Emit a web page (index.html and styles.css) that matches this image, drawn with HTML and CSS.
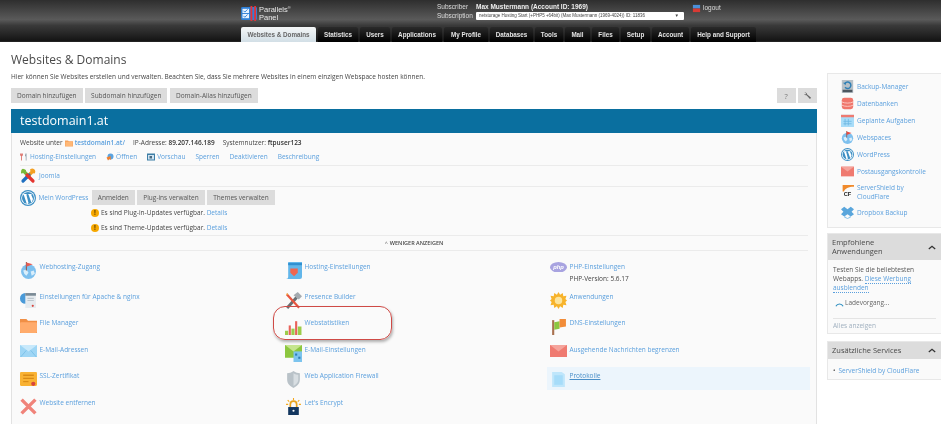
FILE: index.html
```html
<!DOCTYPE html>
<html lang="de">
<head>
<meta charset="utf-8">
<title>Websites &amp; Domains</title>
<link rel="stylesheet" href="styles.css">
</head>
<body>
<header class="topbar">
  <div class="toprow">
    <div class="logo">
      <svg class="logo-mark" viewBox="0 0 18 16"><rect x="0" y="1" width="17" height="14" rx="1.500" fill="#2f7fd6"/><rect x="1.500" y="3" width="7" height="4.500" fill="#e8f2ff"/><rect x="1.500" y="8.500" width="7" height="4.500" fill="#e8f2ff"/><path d="M2.500 5l1.500 1.500 3-3M2.500 10.500l1.500 1.500 3-3" stroke="#2f7fd6" fill="none"/><rect x="10" y="0" width="2" height="16" fill="#e0343a"/><rect x="14" y="0" width="2" height="16" fill="#e0343a"/></svg>
      <div class="logo-text">Parallels<sup>®</sup><br>Panel</div>
    </div>
    <div class="account">
      <div class="account-row"><span class="account-label">Subscriber</span><b class="account-name">Max Mustermann (Account ID: 1969)</b></div>
      <div class="account-row"><span class="account-label">Subscription</span><div class="picker"><span>netstorage Hosting Start (+PHP5 +64bit) (Max Mustermann (1969-4024)) ID: 11836</span><i class="picker-arrow">▼</i></div></div>
    </div>
    <div class="logout">
      <svg class="logout-icon" viewBox="0 0 10 10"><rect x="1" y="1" width="8" height="4" fill="#4a90d9"/><rect x="1" y="5" width="8" height="4" fill="#d83a34"/></svg>logout
    </div>
  </div>
  <nav class="tabs">
    <a class="tab tab-active w1">Websites &amp; Domains</a>
    <a class="tab w2">Statistics</a>
    <a class="tab w3">Users</a>
    <a class="tab w4">Applications</a>
    <a class="tab w5">My Profile</a>
    <a class="tab w6">Databases</a>
    <a class="tab w7">Tools</a>
    <a class="tab w8">Mail</a>
    <a class="tab w9">Files</a>
    <a class="tab w10">Setup</a>
    <a class="tab w11">Account</a>
    <a class="tab w12">Help and Support</a>
  </nav>
</header>

<div class="page">
  <main class="main">
    <h1 class="title">Websites &amp; Domains</h1>
    <p class="desc">Hier können Sie Websites erstellen und verwalten. Beachten Sie, dass Sie mehrere Websites in einem einzigen Webspace hosten können.</p>
    <div class="toolbar">
      <a class="btn">Domain hinzufügen</a>
      <a class="btn">Subdomain hinzufügen</a>
      <a class="btn">Domain-Alias hinzufügen</a>
      <span class="toolbar-gap"></span>
      <a class="btn btn-tool">?</a>
      <a class="btn btn-tool"><svg class="wrench" viewBox="0 0 10 10"><path d="M1.500 1.800a2.500 2.500 0 0 1 3.200 2l4.300 3.700-1.300 1.400-3.800-4.200a2.500 2.500 0 0 1-2.700-1.400l1.500.5 1-1z" fill="#666"/></svg></a>
    </div>

    <section class="card">
      <h2 class="card-title">testdomain1.at</h2>
      <div class="card-body">
        <div class="info-row">
          <span>Website unter</span>
          <svg class="ico8 folder" viewBox="0 0 16 14"><path d="M0 2h6l1.500 1.500H16V14H0z" fill="#f7a35c"/><rect x="1" y="5" width="14" height="8" fill="#ffb877"/></svg>
          <a class="link strong">testdomain1.at/</a>
          <span class="info-gap">IP-Adresse: <b>89.207.146.189</b></span>
          <span class="info-gap">Systemnutzer: <b>ftpuser123</b></span>
        </div>
        <div class="action-row">
          <a class="link action"><svg class="ico8" viewBox="0 0 16 16"><path d="M3 1v6M1 1v3a2 2 0 0 0 4 0V1M3 7v8" stroke="#d9635a" stroke-width="1.600" fill="none"/><path d="M11 1l-1 5 1.500 1V15h1.500V1z" fill="#8a9aa5"/></svg>Hosting-Einstellungen</a>
          <a class="link action"><svg class="ico8" viewBox="0 0 16 16"><circle cx="9" cy="7" r="6" fill="#5aa3e0"/><path d="M1 9l8-3 1 8-3-2-3 3z" fill="#f08030"/></svg>Öffnen</a>
          <a class="link action"><svg class="ico8" viewBox="0 0 16 16"><rect y="1" width="16" height="14" fill="#3d7ea6"/><rect x="2" y="4" width="12" height="9" fill="#cfe3f2"/><rect x="5" y="6" width="5" height="5" fill="#4a6a80"/></svg>Vorschau</a>
          <a class="link action">Sperren</a>
          <a class="link action">Deaktivieren</a>
          <a class="link action">Beschreibung</a>
        </div>
        <div class="app-row joomla-row">
          <svg class="ico16" viewBox="0 0 16 16" fill="none" stroke-width="3.200" stroke-linecap="round"><path d="M3 2.500L9 8.500" stroke="#7ab838"/><path d="M13 3L7 9" stroke="#f4a023"/><path d="M3 13L9 7" stroke="#1f6fc0"/><path d="M13 13L7 7" stroke="#e4352f"/><path d="M2 4.500a2 2 0 0 1 3-2" stroke="#7ab838" stroke-width="2"/><path d="M11 2a2 2 0 0 1 3 2.500" stroke="#f4a023" stroke-width="2"/></svg>
          <a class="link">Joomla</a>
        </div>
        <div class="wp-block">
          <div class="wp-row">
            <svg class="ico16" viewBox="0 0 16 16"><use href="#wp"/></svg>
            <a class="link wp-link">Mein WordPress</a>
            <a class="btn">Anmelden</a>
            <a class="btn">Plug-ins verwalten</a>
            <a class="btn">Themes verwalten</a>
          </div>
          <div class="notice"><i class="warn">!</i>Es sind Plug-in-Updates verfügbar.&nbsp;<a class="link">Details</a></div>
          <div class="notice"><i class="warn">!</i>Es sind Theme-Updates verfügbar.&nbsp;<a class="link">Details</a></div>
        </div>
        <div class="less"><span class="less-caret">^</span>WENIGER ANZEIGEN</div>

        <div class="grid">
          <div class="item"><svg class="ico16" viewBox="0 0 16 16"><circle cx="8" cy="9" r="7" fill="#7ec0ee"/><path d="M3 8l3-1 2 3-2 3-2-2zM10 9l3-1 1 3-3 2z" fill="#d9eefb"/><path d="M6 0v8" stroke="#8a5a50"/><path d="M6 0.500l6 1.500-6 2.500z" fill="#ea5a50"/></svg><a class="link">Webhosting-Zugang</a></div>
          <div class="item"><svg class="ico16" viewBox="0 0 16 16"><path d="M3 0h13v14a2 2 0 0 1-2 2H1a2 2 0 0 0 2-2z" fill="#62b6ea"/><rect x="3" y="1" width="13" height="2" fill="#2f8fd0"/><path d="M5 6h7v4l-3.500 3.500L5 10z" fill="#f0654f"/></svg><a class="link">Hosting-Einstellungen</a></div>
          <div class="item"><svg class="ico16" viewBox="0 0 16 10"><ellipse cx="8" cy="5" rx="8" ry="5" fill="#a8a3e0"/><text class="php-text" x="8" y="7">php</text></svg><div><a class="link">PHP-Einstellungen</a><div class="sub">PHP-Version: 5.6.17</div></div></div>

          <div class="item"><svg class="ico16" viewBox="0 0 16 16"><circle cx="5" cy="6" r="5" fill="#4a9ad8"/><rect x="5" y="1" width="10" height="14" fill="#e6ebef"/><rect x="5" y="1" width="10" height="2.500" fill="#7a8a95"/><path d="M7 6h6M7 8h6" stroke="#bcc6cd"/><circle cx="12" cy="13" r="1" fill="#d8453c"/></svg><a class="link">Einstellungen für Apache &amp; nginx</a></div>
          <div class="item"><svg class="ico16" viewBox="0 0 16 16"><path d="M1 14L10 4l2 2-9 10z" fill="#6b6f73"/><path d="M8 3l4-3 4 4-3 3z" fill="#a5abb0"/><path d="M2 1l12 13-1.500 1.500L1 3z" fill="#e8563f"/><path d="M2 1l-1 2 2-1z" fill="#f2c94c"/></svg><a class="link">Presence Builder</a></div>
          <div class="item"><svg class="ico16" viewBox="0 0 16 16"><path d="M8 0l1.500 2.500L12 1l.5 3 3-.500-1 3 1.500 1.500-1.500 1.500 1 3-3-.500-.5 3-2.500-1.500L8 16l-1.500-2.500L4 15l-.5-3-3 .500 1-3L0 8l1.500-1.500-1-3 3 .500L4 1l2.500 1.500z" fill="#f7b32b"/><circle cx="8" cy="8" r="3.500" fill="#fde49b"/></svg><a class="link">Anwendungen</a></div>

          <div class="item"><svg class="ico16" viewBox="0 0 16 14"><path d="M0 1h6l1.500 1.500H16V14H0z" fill="#f08f45"/><rect y="4" width="16" height="10" rx="1" fill="#ffab6b"/></svg><a class="link">File Manager</a></div>
          <div class="item"><svg class="ico16" viewBox="0 0 16 16"><rect x="0" y="12" width="3" height="4" fill="#9ccc4a"/><rect x="3.500" y="7" width="2" height="9" fill="#e8625a"/><rect x="6" y="10" width="3" height="6" fill="#9ccc4a"/><rect x="9.500" y="3" width="2" height="13" fill="#e8625a"/><rect x="12" y="8" width="3.500" height="8" fill="#9ccc4a"/></svg><a class="link">Webstatistiken</a><span class="callout"></span></div>
          <div class="item"><svg class="ico16" viewBox="0 0 16 16"><path d="M3 2v14" stroke="#a8714f" stroke-width="2"/><path d="M4 4l5-1v7l-5 1z" fill="#8cc63f"/><path d="M9 1h6v7l-6 1z" fill="#f28c38"/></svg><a class="link">DNS-Einstellungen</a></div>

          <div class="item"><svg class="ico16" viewBox="0 0 16 12"><rect width="16" height="12" fill="#9fd6f5"/><path d="M0 0l8 6 8-6" fill="#c8e9fb"/><path d="M0 12l6-7M16 12l-6-7" stroke="#6db8e5" stroke-width=".6"/></svg><a class="link">E-Mail-Adressen</a></div>
          <div class="item"><svg class="ico16" viewBox="0 0 16 16"><rect width="16" height="12" fill="#8cc63f"/><path d="M0 0l8 6 8-6z" fill="#c5e58d"/><rect x="8" y="6" width="8" height="10" fill="#7cc4ee"/><rect x="9.500" y="8" width="2" height="2" fill="#2f7fb5"/><rect x="12.500" y="11" width="2" height="2" fill="#2f7fb5"/></svg><a class="link">E-Mail-Einstellungen</a></div>
          <div class="item"><svg class="ico16" viewBox="0 0 16 12"><rect width="16" height="12" fill="#ef7a70"/><path d="M0 0l8 6 8-6z" fill="#f5a49c"/></svg><a class="link">Ausgehende Nachrichten begrenzen</a></div>

          <div class="item"><svg class="ico16" viewBox="0 0 16 16"><rect y="1" width="16" height="13" rx="1" fill="#f9b233"/><path d="M3 4h10M3 7h10" stroke="#d98a16" stroke-width="1.200"/><path d="M3 10h5" stroke="#d98a16"/><circle cx="12.500" cy="12" r="2" fill="#d8453c"/></svg><a class="link">SSL-Zertifikat</a></div>
          <div class="item"><svg class="ico16" viewBox="0 0 16 16"><path d="M8 0c2 1.500 4 2 6 2v6c0 4-3 6.500-6 8-3-1.500-6-4-6-8V2c2 0 4-.5 6-2z" fill="#b9c2c8"/><path d="M8 2c1.500 1 3 1.500 4.500 1.500V8c0 3-2.500 5-4.500 6.200z" fill="#d8dee2"/></svg><a class="link">Web Application Firewall</a></div>
          <div class="item item-hover"><svg class="ico16" viewBox="0 0 16 16"><path d="M2 1h9l3 2v12H2z" fill="#bfe6fb"/><rect x="4" y="4" width="8" height="9" fill="#a6dcf9"/></svg><a class="link underlined">Protokolle</a></div>

          <div class="item"><svg class="ico16" viewBox="0 0 16 16"><path d="M1.500 1.500l13 13M14.500 1.500l-13 13" stroke="#f0837a" stroke-width="3.200"/></svg><a class="link">Website entfernen</a></div>
          <div class="item"><svg class="ico16" viewBox="0 0 16 16"><path d="M5 9V6a3 3 0 0 1 6 0v3" stroke="#e8a31c" stroke-width="1.600" fill="none"/><rect x="3" y="8.500" width="10" height="7.500" fill="#13365f"/><circle cx="8" cy="12" r="1" fill="#fff"/><path d="M8 0v2M1 6h2M13 6h2M2.500 2l1.500 1.500M13.500 2L12 3.500" stroke="#f4a81d"/></svg><a class="link">Let's Encrypt</a></div>
        </div>
      </div>
    </section>
  </main>

  <aside class="side">
    <div class="panel quick">
      <a class="side-link"><svg class="ico14" viewBox="0 0 16 16"><rect x="1" y="0" width="14" height="16" fill="#b7c0c7"/><rect x="2" y="12" width="12" height="3" fill="#4d5760"/><path d="M5 4a4 4 0 1 1 0 5" stroke="#2f7fb5" stroke-width="1.800" fill="none"/><path d="M2.500 3.500l4 0-1 3z" fill="#2f7fb5"/></svg>Backup-Manager</a>
      <a class="side-link"><svg class="ico14" viewBox="0 0 16 16"><rect x="1" y="1" width="14" height="14" rx="3" fill="#f0766b"/><path d="M1 6c3 2 11 2 14 0M1 10c3 2 11 2 14 0" stroke="#fbd6d2" fill="none"/></svg>Datenbanken</a>
      <a class="side-link"><svg class="ico14" viewBox="0 0 16 16"><rect y="1" width="16" height="15" fill="#a8dcf8"/><rect y="1" width="16" height="3" fill="#ef7a70"/><path d="M5 6v8M9 6v8M3 9h10M3 12h10" stroke="#6cb8e3"/></svg>Geplante Aufgaben</a>
      <a class="side-link"><svg class="ico14" viewBox="0 0 16 16"><circle cx="8" cy="9" r="7" fill="#7ec0ee"/><path d="M3 8l3-1 2 3-2 3-2-2zM10 9l3-1 1 3-3 2z" fill="#d9eefb"/><path d="M7 0v8" stroke="#8a5a50"/><path d="M7 0.500l6 2-6 2.500z" fill="#ea4a40"/></svg>Webspaces</a>
      <a class="side-link"><svg class="ico14" viewBox="0 0 16 16"><use href="#wp"/></svg>WordPress</a>
      <a class="side-link"><svg class="ico14" viewBox="0 0 16 12"><rect width="16" height="12" fill="#ef7a70"/><path d="M0 0l8 6 8-6z" fill="#f5a49c"/></svg>Postausgangskontrolle</a>
      <a class="side-link two-line"><svg class="ico14" viewBox="0 0 16 16"><path d="M2 0h14v2C9 2 5 4 3.500 8H2z" fill="#f08a2c"/><text class="cf-text" x="8" y="14">CF</text></svg><span class="side-wrap">ServerShield by CloudFlare</span></a>
      <a class="side-link"><svg class="ico14" viewBox="0 0 16 16"><path d="M4 1l4 3 4-3 4 3-3 3 3 3-4 3-4-3-4 3-4-3 3-3-3-3z" fill="#5aa6dc"/><path d="M4 12l4 3 4-3v2l-4 2-4-2z" fill="#8cc4ea"/></svg>Dropbox Backup</a>
    </div>

    <div class="panel promo">
      <div class="panel-head head-tall"><span>Empfohlene Anwendungen</span><svg class="chevron" viewBox="0 0 10 6"><path d="M1 5l4-3.500L9 5" stroke="#333" stroke-width="1.600" fill="none"/></svg></div>
      <div class="panel-body">
        <p class="promo-text">Testen Sie die beliebtesten Webapps. <a class="link dotted">Diese Werbung ausblenden</a></p>
        <div class="loading"><svg class="spinner" viewBox="0 0 10 10"><path d="M1 8a4.500 4.500 0 0 1 8 0" stroke="#2f8fc0" stroke-width="1.300" fill="none"/></svg>Ladevorgang...</div>
        <a class="all-link">Alles anzeigen</a>
      </div>
    </div>

    <div class="panel services">
      <div class="panel-head"><span>Zusätzliche Services</span><svg class="chevron" viewBox="0 0 10 6"><path d="M1 5l4-3.500L9 5" stroke="#333" stroke-width="1.600" fill="none"/></svg></div>
      <ul class="service-list"><li><a class="link">ServerShield by CloudFlare</a></li></ul>
    </div>
  </aside>
</div>

<svg class="defs" width="0" height="0">
  <symbol id="wp" viewBox="0 0 16 16"><circle cx="8" cy="8" r="8" fill="#3d8fc4"/><circle cx="8" cy="8" r="6.800" fill="#fff"/><circle cx="8" cy="8" r="6" fill="#3d8fc4"/><path d="M3 4h4l-.6.800L8.500 13 7 14.500 4 5.500zM7.500 4h4.500l-.8.800L13 9l-1.500 4-3-8.500z" fill="#fff"/></symbol>
</svg>
</body>
</html>
```

FILE: styles.css
```css
* { box-sizing: border-box; }
html, body { margin: 0; padding: 0; height: 424px; overflow: hidden; background: #fff; }
body { font-family: "Open Sans", sans-serif; font-size: 6.500px; color: #444; line-height: 10px; filter: blur(.35px); }
a { text-decoration: none; }
p, h1, h2, ul { margin: 0; padding: 0; }
.defs { position: absolute; }

.topbar { height: 42px; padding-left: 241px; background: linear-gradient(#2e2e2e, #5a5a5a 48%, #3a3a3a 62%, #141414); border-bottom: 1px solid #222; }
.toprow { display: flex; height: 27px; }
.logo { display: flex; width: 196px; padding-top: 6px; }
.logo-mark { width: 17px; height: 15px; }
.logo-text { font-family: "Liberation Sans", sans-serif; font-size: 7.500px; line-height: 7.500px; color: #e8e8e8; padding-left: 1px; }
.logo-text sup { font-size: 4px; line-height: 0; }
.account { width: 255px; padding-top: 2px; font-family: "Liberation Sans", sans-serif; color: #ddd; font-size: 6.500px; }
.account-row { display: flex; height: 9px; line-height: 9px; align-items: center; }
.account-label { width: 39px; }
.account-name { color: #eee; font-size: 6.500px; }
.picker { width: 208px; height: 8px; background: #fff; color: #444; font-size: 4.500px; line-height: 8px; padding-left: 3px; display: flex; justify-content: space-between; border-radius: 1px; }
.picker-arrow { font-style: normal; padding-right: 5px; }
.logout { display: flex; align-items: center; height: 10px; margin-top: 3px; color: #ddd; font-family: "Liberation Sans", sans-serif; font-size: 6.500px; }
.logout-icon { width: 9px; height: 9px; margin-right: 2px; }

.tabs { display: flex; height: 15px; gap: 2px; }
.tab { height: 15px; line-height: 15px; text-align: center; font-family: "Liberation Sans", sans-serif; font-weight: bold; font-size: 6.300px; color: #e4e4e4; background: linear-gradient(#2a2a2a, #000); border-radius: 2px 2px 0 0; }
.tab-active { color: #666; background: linear-gradient(#f4f6f7, #d2dfe6); }
.w1 { width: 75px; } .w2 { width: 40px; } .w3 { width: 30px; } .w4 { width: 50px; } .w5 { width: 44px; } .w6 { width: 43px; }
.w7 { width: 28px; } .w8 { width: 25px; } .w9 { width: 27px; } .w10 { width: 29px; } .w11 { width: 37px; } .w12 { width: 65px; }

.page { display: flex; padding-left: 11px; }
.main { width: 806px; }
.title { font-size: 12px; line-height: 18px; font-weight: normal; color: #4a4a4a; margin-top: 9px; }
.desc { margin-top: 3px; line-height: 10px; color: #444; }

.toolbar { display: flex; gap: 2.500px; margin-top: 6px; }
.toolbar-gap { flex: 1; }
.btn { display: flex; align-items: center; justify-content: center; height: 15px; padding: 0 6px; background: #dcdcdc; color: #555; white-space: nowrap; }
.btn-tool { width: 19px; padding: 0; color: #777; font-size: 7.500px; }
.wrench { width: 9px; height: 9px; }

.card { margin-top: 6px; border: solid #e2e2e2; border-width: 0 1px; height: 315px; }
.card-title { height: 24px; line-height: 24px; padding-left: 9px; margin: 0 -1px; background: #0a6f9f; color: #fff; font-size: 12.500px; font-weight: normal; }
.card-body { padding: 0 8px; background: #fafafa; height: 291px; }
.info-row { display: flex; align-items: center; gap: 2px; height: 19px; }
.info-gap { margin-left: 6px; }
.info-row b { color: #333; font-weight: 600; }
.strong { font-weight: 600; }
.ico8 { width: 8px; height: 8px; margin-right: 2px; flex: none; }
.folder { margin-right: 0; }
.ico16 { width: 16px; height: 16px; flex: none; }
.ico14 { width: 13px; height: 13px; flex: none; margin-right: 3px; }
.link { color: #5a9fdd; }
.action-row { display: flex; align-items: center; gap: 10px; height: 10px; }
.action { display: flex; align-items: center; }
.app-row { display: flex; align-items: center; gap: 3px; }
.joomla-row { height: 22px; border: solid #ebebeb; border-width: 1px 0; margin-top: 3px; }
.wp-block { height: 49px; border-bottom: 1px solid #ebebeb; padding-top: 3px; }
.wp-row { display: flex; align-items: center; gap: 2.500px; height: 15px; }
.wp-link { margin-right: 1px; }
.notice { display: flex; align-items: center; height: 15px; padding-left: 71px; }
.warn { display: inline-block; width: 8px; height: 8px; border-radius: 50%; margin-right: 2px; background: #f6a800; color: #5a3a00; font: bold 6.500px/8px "Open Sans", sans-serif; text-align: center; }
.less { height: 15px; line-height: 15px; text-align: center; font-size: 5.500px; font-weight: 600; color: #444; border-bottom: 1px solid #ebebeb; }
.less-caret { margin-right: 2px; color: #888; }

.grid { display: grid; grid-template-columns: repeat(3, 1fr); grid-template-rows: 30px repeat(5, 26.500px); margin: 6px -4px 0 -3px; }
.item { position: relative; display: flex; gap: 2.500px; padding: 4.500px 0 0 3px; line-height: 10px; }
.item .ico16 { width: 17px; height: auto; align-self: flex-start; }
.sub { color: #444; margin-top: 2px; }
.php-text { font: italic bold 5.500px "Liberation Sans", sans-serif; fill: #fff; text-anchor: middle; }
.item-hover { background: #ecf5fc; height: 23px; margin-right: 2px; }
.underlined { text-decoration: underline; color: #4a8fc8; }
.callout { position: absolute; left: -9px; top: -7.500px; width: 119px; height: 34px; border: 1.500px solid #cf4a46; border-radius: 12px; box-shadow: 1px 2px 3px rgba(0, 0, 0, .3); }

.side { width: 114px; margin-left: 10px; }
.panel { border: 1px solid #e8e8e8; border-right: 0; background: #fafafa; }
.quick { margin-top: 31px; height: 155px; padding: 4px 0 0 13px; }
.side-link { display: flex; align-items: center; min-height: 17px; color: #5a9fdd; line-height: 9px; }
.two-line { height: 24px; padding-bottom: 1px; }
.side-wrap { width: 60px; }
.promo { margin-top: 5px; height: 101px; }
.panel-head { display: flex; justify-content: space-between; align-items: center; height: 17px; padding: 0 4px; background: #dcdcdc; font-size: 7.500px; line-height: 9px; color: #4a4a4a; }
.head-tall { height: 26px; }
.head-tall span { width: 70px; }
.chevron { width: 8px; height: 5px; flex: none; margin-right: 1px; }
.panel-body { padding: 5px 5px 4px; }
.promo-text { line-height: 9px; color: #555; }
.dotted { border-bottom: 1px dotted #5a9fdd; }
.loading { display: flex; align-items: center; height: 12px; margin-top: 5px; padding-left: 2px; color: #666; }
.spinner { width: 9px; height: 9px; margin-right: 1px; }
.all-link { display: block; margin-top: 9px; padding-top: 2px; border-top: 1px solid #e4e4e4; color: #a0b0bf; }
.services { margin-top: 7px; height: 39px; }
.service-list { list-style: none; padding: 7px 5px; }
.service-list li::before { content: "•"; margin-right: 3px; color: #555; }
.cf-text { font: bold 7px "Liberation Sans", sans-serif; fill: #222; text-anchor: middle; }
```
